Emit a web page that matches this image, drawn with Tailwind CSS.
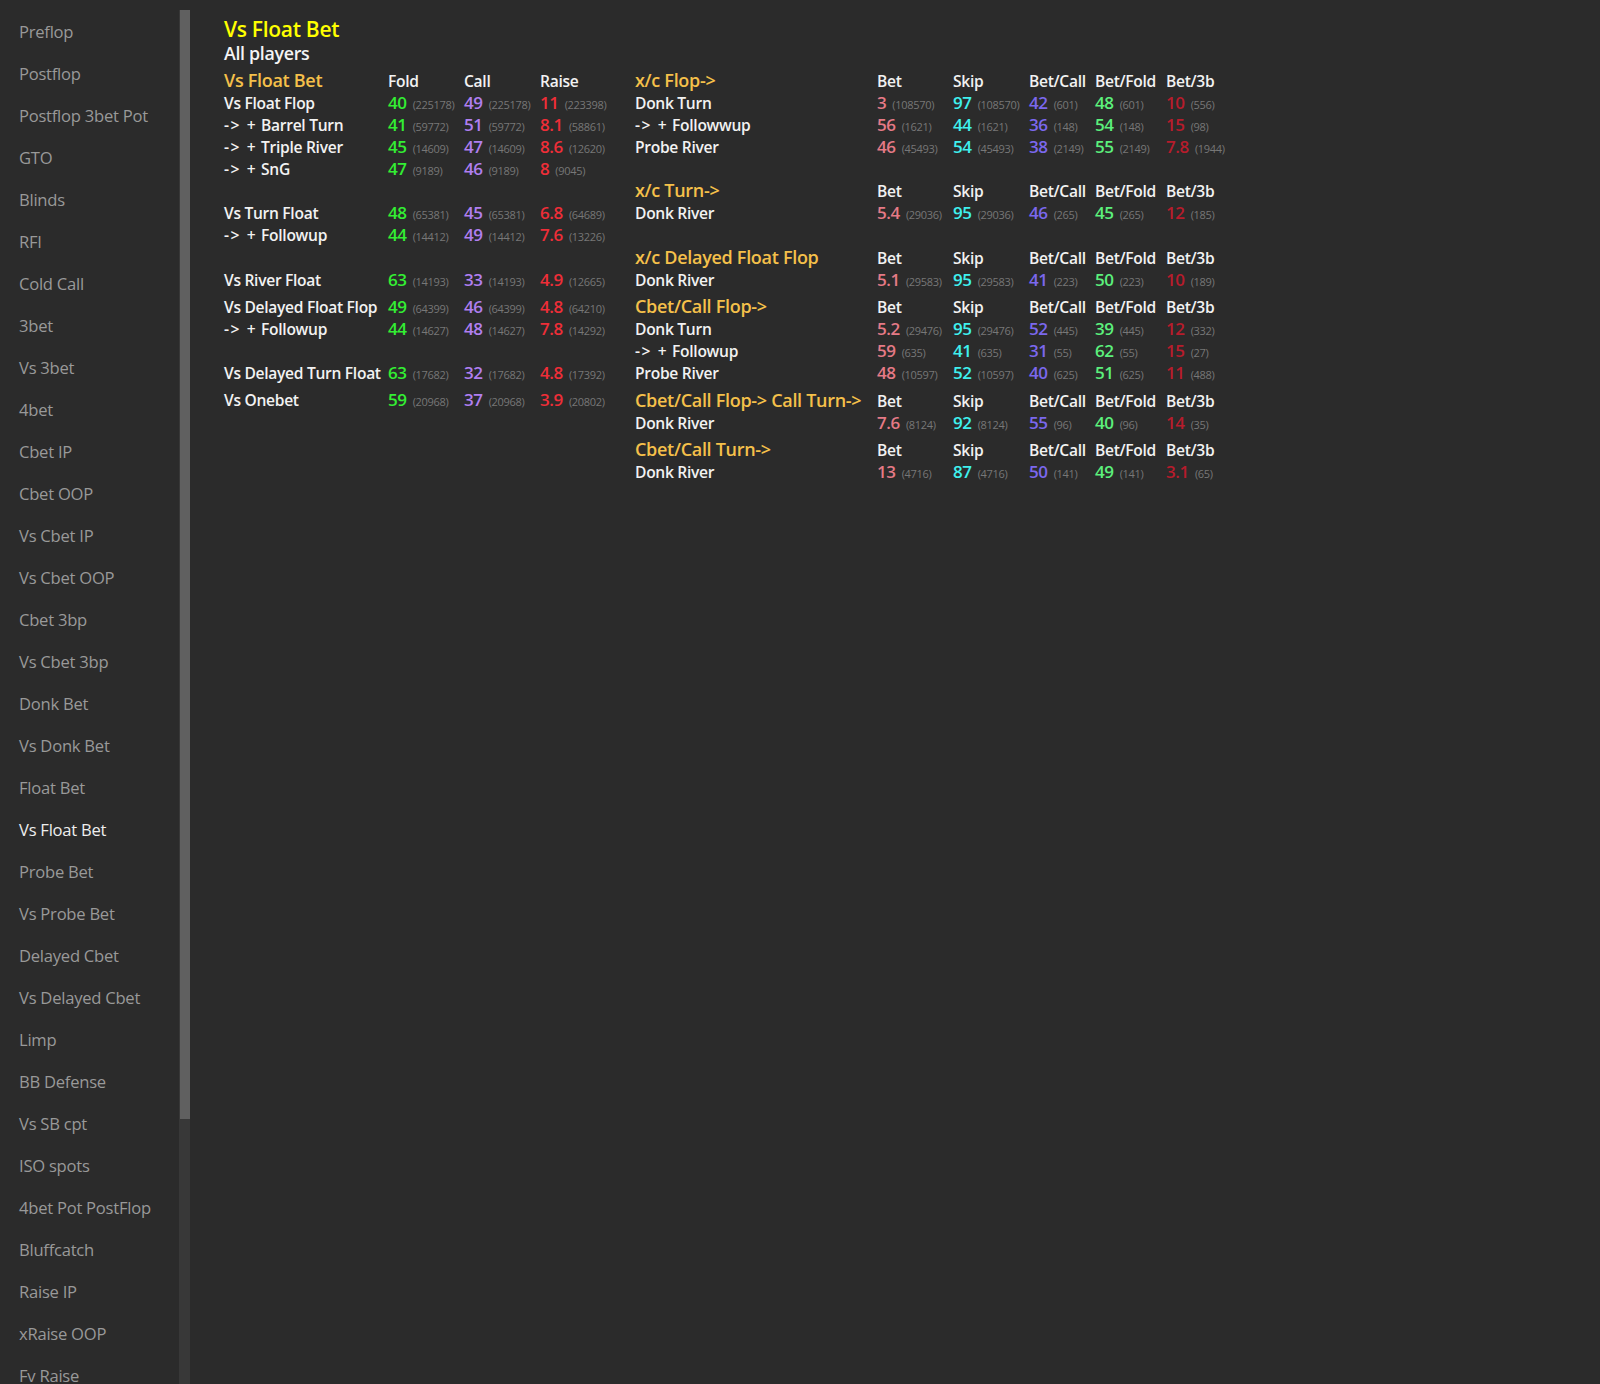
<!DOCTYPE html>
<html lang="en">
<head>
	<meta charset="UTF-8">
	<title>Vs Float Bet</title>
	<script src="https://cdn.jsdelivr.net/npm/@tailwindcss/browser@4"></script>
</head>
<body class="bg-[#2b2b2b] h-screen overflow-hidden flex font-['Open_Sans','Noto_Sans',sans-serif]">
	<!-- sidebar -->
	<aside class="w-[190px] h-[1384px] shrink-0 flex overflow-hidden">
		<nav id="menu" class="w-[179px] pt-[11px] text-[16.6px] leading-[42px] tracking-[-0.25px] text-[#999] pl-[19px]"></nav>
		<div class="w-[11px] pl-px pt-[10px] bg-gradient-to-b from-[#2b2b2b] from-[10px] to-[#383838] to-[10px]">
			<div class="w-[10px] h-[1109px] bg-[#606060]"></div>
		</div>
	</aside>

	<main class="pl-[34px] pt-[16px]">
		<h1 class="text-[21px] leading-[26px] font-semibold tracking-[-0.3px] text-[#ffff00]">Vs Float Bet</h1>
		<h2 class="text-[17.8px] leading-[22px] font-semibold tracking-[-0.3px] text-[#f4f4f4]">All players</h2>
		<div class="flex mt-[6px]">
			<table id="left" class="w-[411px] h-fit table-fixed border-collapse text-[15.6px] font-semibold tracking-[-0.3px] text-[#f2f2f2]">
				<colgroup><col class="w-[164px]"><col class="w-[76px]"><col class="w-[76px]"><col></colgroup>
				<tbody></tbody>
			</table>
			<table id="right" class="w-[640px] h-fit table-fixed border-collapse text-[15.6px] font-semibold tracking-[-0.3px] text-[#f2f2f2]">
				<colgroup><col class="w-[242px]"><col class="w-[76px]"><col class="w-[76px]"><col class="w-[66px]"><col class="w-[71px]"><col></colgroup>
				<tbody></tbody>
			</table>
		</div>
	</main>

	<script>
		const menu = ["Preflop","Postflop","Postflop 3bet Pot","GTO","Blinds","RFI","Cold Call","3bet","Vs 3bet","4bet","Cbet IP","Cbet OOP","Vs Cbet IP","Vs Cbet OOP","Cbet 3bp","Vs Cbet 3bp","Donk Bet","Vs Donk Bet","Float Bet","Vs Float Bet","Probe Bet","Vs Probe Bet","Delayed Cbet","Vs Delayed Cbet","Limp","BB Defense","Vs SB cpt","ISO spots","4bet Pot PostFlop","Bluffcatch","Raise IP","xRaise OOP","Fv Raise"];
		document.getElementById("menu").innerHTML = menu.map(m =>
			`<div class="${m === "Vs Float Bet" ? "text-[#eeeeee]" : ""}">${m}</div>`).join("");

		const leftColors = ["text-[#33ee33]","text-[#b07ff0]","text-[#ee2e38]"];
		const rightColors = ["text-[#e57a86]","text-[#3ff0ee]","text-[#7b68ee]","text-[#5cf07c]","text-[#b71c2c]"];

		// [label, val, count, val, count ...]; h = heading row, g = gap row with its height
		const leftRows = [
			{h:"Vs Float Bet", cols:["Fold","Call","Raise"]},
			["Vs Float Flop","40",225178,"49",225178,"11",223398],
			["-> + Barrel Turn","41",59772,"51",59772,"8.1",58861],
			["-> + Triple River","45",14609,"47",14609,"8.6",12620],
			["-> + SnG","47",9189,"46",9189,"8",9045],
			{g:22},
			["Vs Turn Float","48",65381,"45",65381,"6.8",64689],
			["-> + Followup","44",14412,"49",14412,"7.6",13226],
			{g:23},
			["Vs River Float","63",14193,"33",14193,"4.9",12665],
			{g:5},
			["Vs Delayed Float Flop","49",64399,"46",64399,"4.8",64210],
			["-> + Followup","44",14627,"48",14627,"7.8",14292],
			{g:22},
			["Vs Delayed Turn Float","63",17682,"32",17682,"4.8",17392],
			{g:5},
			["Vs Onebet","59",20968,"37",20968,"3.9",20802],
		];
		const betCols = ["Bet","Skip","Bet/Call","Bet/Fold","Bet/3b"];
		const rightRows = [
			{h:"x/c Flop->", cols:betCols},
			["Donk Turn","3",108570,"97",108570,"42",601,"48",601,"10",556],
			["-> + Followwup","56",1621,"44",1621,"36",148,"54",148,"15",98],
			["Probe River","46",45493,"54",45493,"38",2149,"55",2149,"7.8",1944],
			{g:22},
			{h:"x/c Turn->", cols:betCols},
			["Donk River","5.4",29036,"95",29036,"46",265,"45",265,"12",185],
			{g:23},
			{h:"x/c Delayed Float Flop", cols:betCols},
			["Donk River","5.1",29583,"95",29583,"41",223,"50",223,"10",189],
			{g:5},
			{h:"Cbet/Call Flop->", cols:betCols},
			["Donk Turn","5.2",29476,"95",29476,"52",445,"39",445,"12",332],
			["-> + Followup","59",635,"41",635,"31",55,"62",55,"15",27],
			["Probe River","48",10597,"52",10597,"40",625,"51",625,"11",488],
			{g:6},
			{h:"Cbet/Call Flop-> Call Turn->", cols:betCols},
			["Donk River","7.6",8124,"92",8124,"55",96,"40",96,"14",35],
			{g:5},
			{h:"Cbet/Call Turn->", cols:betCols},
			["Donk River","13",4716,"87",4716,"50",141,"49",141,"3.1",65],
		];

		// the arrow prefix sits wider in the reference than the plain glyphs here
		function label(text) {
			return text.replace("-> + ", `<span class="tracking-[1.5px] mr-[2px]">-&gt;</span> <span class="mr-[2px]">+</span> `);
		}

		function renderRow(r, colors) {
			if (r.g) return `<tr><td colspan="6" style="height:${r.g}px"></td></tr>`;
			if (r.h) {
				return `<tr class="h-[22px]"><td class="p-0 align-baseline text-[18px] leading-[20px] text-[#f5c04a] whitespace-nowrap">${r.h.replace(/>/g, "&gt;")}</td>` +
					r.cols.map(c => `<td class="p-0 align-baseline leading-[22px] whitespace-nowrap">${c}</td>`).join("") + `</tr>`;
			}
			let cells = `<td class="p-0 align-baseline leading-[22px] whitespace-nowrap">${label(r[0])}</td>`;
			for (let i = 1; i < r.length; i += 2) {
				cells += `<td class="p-0 align-baseline leading-[22px] whitespace-nowrap"><span class="text-[17px] leading-none tracking-[-0.4px] ${colors[(i - 1) / 2]}">${r[i]}</span><span class="ml-[6px] text-[11px] leading-none font-normal text-[#777]">(${r[i + 1]})</span></td>`;
			}
			return `<tr class="h-[22px]">${cells}</tr>`;
		}

		document.querySelector("#left tbody").innerHTML = leftRows.map(r => renderRow(r, leftColors)).join("");
		document.querySelector("#right tbody").innerHTML = rightRows.map(r => renderRow(r, rightColors)).join("");
	</script>
</body>
</html>
